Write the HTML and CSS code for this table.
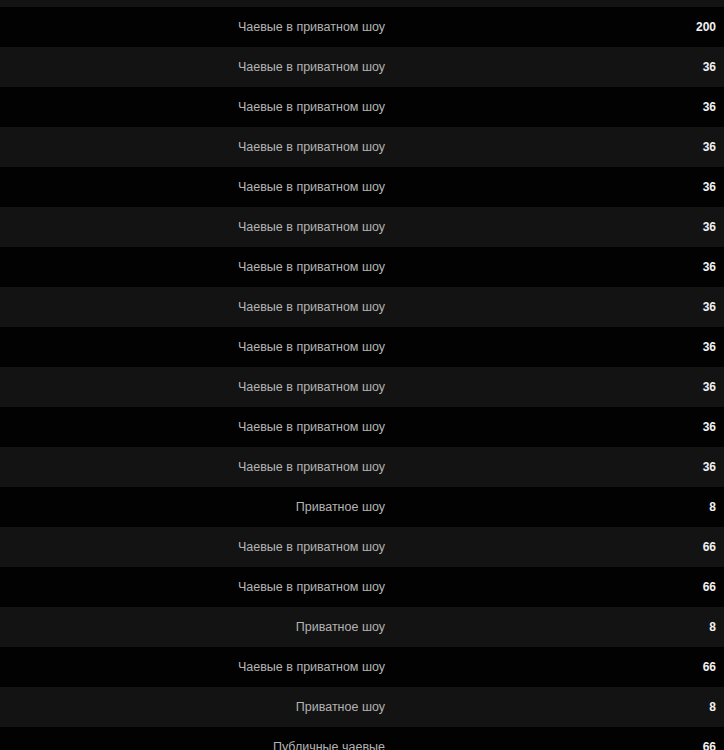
FILE: index.html
```html
<!DOCTYPE html>
<html lang="ru">
<head>
  <meta charset="UTF-8">
  <title>История</title>
  <link rel="stylesheet" href="styles.css">
</head>
<body>
  <div class="history">
    <div class="row"><div class="desc"></div><div class="amount"></div></div>
    <div class="row"><div class="desc">Чаевые в приватном шоу</div><div class="amount">200</div></div>
    <div class="row"><div class="desc">Чаевые в приватном шоу</div><div class="amount">36</div></div>
    <div class="row"><div class="desc">Чаевые в приватном шоу</div><div class="amount">36</div></div>
    <div class="row"><div class="desc">Чаевые в приватном шоу</div><div class="amount">36</div></div>
    <div class="row"><div class="desc">Чаевые в приватном шоу</div><div class="amount">36</div></div>
    <div class="row"><div class="desc">Чаевые в приватном шоу</div><div class="amount">36</div></div>
    <div class="row"><div class="desc">Чаевые в приватном шоу</div><div class="amount">36</div></div>
    <div class="row"><div class="desc">Чаевые в приватном шоу</div><div class="amount">36</div></div>
    <div class="row"><div class="desc">Чаевые в приватном шоу</div><div class="amount">36</div></div>
    <div class="row"><div class="desc">Чаевые в приватном шоу</div><div class="amount">36</div></div>
    <div class="row"><div class="desc">Чаевые в приватном шоу</div><div class="amount">36</div></div>
    <div class="row"><div class="desc">Чаевые в приватном шоу</div><div class="amount">36</div></div>
    <div class="row"><div class="desc">Приватное шоу</div><div class="amount">8</div></div>
    <div class="row"><div class="desc">Чаевые в приватном шоу</div><div class="amount">66</div></div>
    <div class="row"><div class="desc">Чаевые в приватном шоу</div><div class="amount">66</div></div>
    <div class="row"><div class="desc">Приватное шоу</div><div class="amount">8</div></div>
    <div class="row"><div class="desc">Чаевые в приватном шоу</div><div class="amount">66</div></div>
    <div class="row"><div class="desc">Приватное шоу</div><div class="amount">8</div></div>
    <div class="row"><div class="desc">Публичные чаевые</div><div class="amount">66</div></div>
  </div>
</body>
</html>
```

FILE: styles.css
```css
* {
  box-sizing: border-box;
}

body {
  margin: 0;
  background-color: #000;
  font-family: 'Liberation Sans', Arial, sans-serif;
  overflow: hidden;
}

.history {
  margin-top: -33px;
}

.row {
  display: grid;
  grid-template-columns: 393px 1fr;
  align-items: center;
  height: 40px;
  padding-bottom: 1px;
  background-color: #131313;
}

.row:nth-child(even) {
  background-color: #020202;
}

.desc {
  text-align: right;
  padding-right: 8px;
  font-size: 12.5px;
  color: #b4b4b4;
}

.amount {
  text-align: right;
  padding-right: 8px;
  font-size: 12px;
  font-weight: bold;
  color: #f2f2f2;
}
```
